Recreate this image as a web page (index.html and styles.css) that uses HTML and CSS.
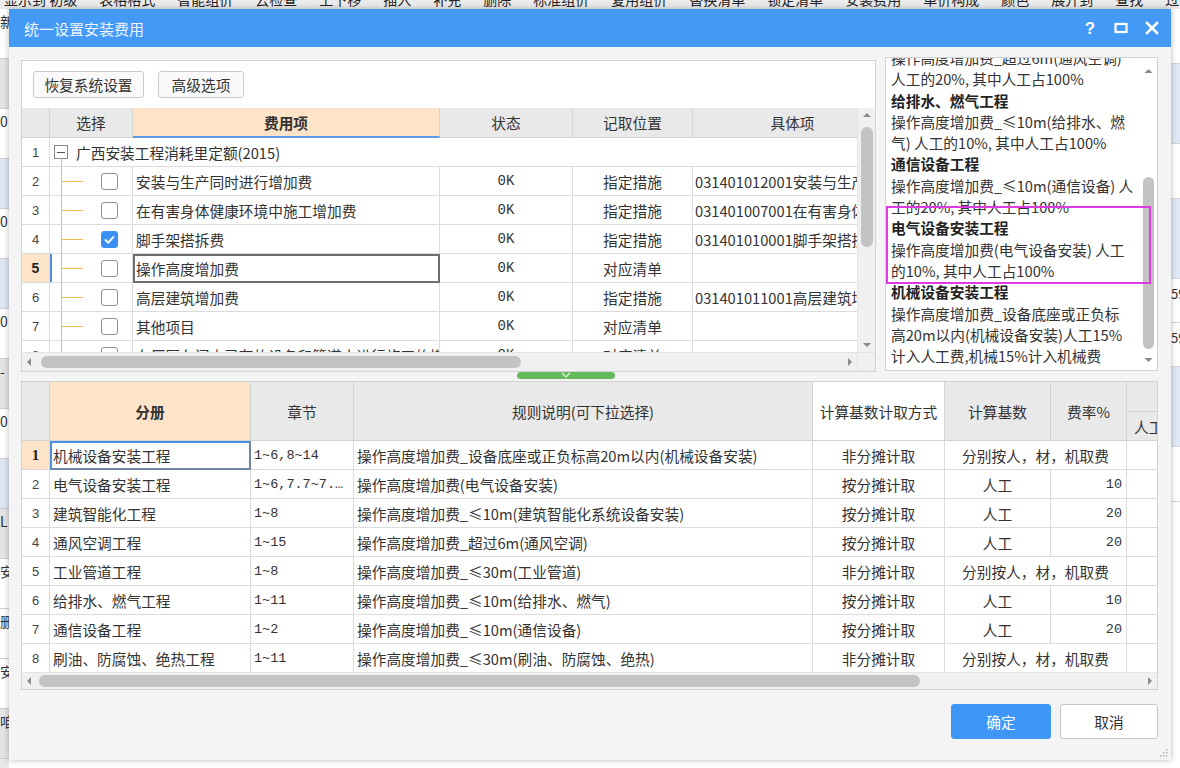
FILE: index.html
```html
<!DOCTYPE html>
<html lang="zh-CN">
<head>
<meta charset="utf-8">
<title>统一设置安装费用</title>
<link rel="stylesheet" href="styles.css">
</head>
<body>
<div class="backdrop">
  <div class="bg-top"><span>显示到 初级</span><span>表格格式</span><span>智能组价</span><span>云检查</span><span>上下移</span><span>插入</span><span>补充</span><span>删除</span><span>标准组价</span><span>复用组价</span><span>替换清单</span><span>锁定清单</span><span>安装费用</span><span>单价构成</span><span>颜色</span><span>展开到</span><span>查找</span><span>过滤</span></div>
  <div class="bg-main">
    <div class="bg-left">
      <div class="bl bl-white">新</div>
      <div class="bl bl-gray"></div>
      <div class="bl bl-white">0</div>
      <div class="bl bl-blue"></div>
      <div class="bl bl-white">0</div>
      <div class="bl bl-blue"></div>
      <div class="bl bl-white">0</div>
      <div class="bl bl-gray">-</div>
      <div class="bl bl-white">0</div>
      <div class="bl bl-blue"></div>
      <div class="bl bl-gray">L</div>
      <div class="bl bl-white">安</div>
      <div class="bl bl-white">删</div>
      <div class="bl bl-white">安</div>
      <div class="bl bl-gray">咱</div>
    </div>
    <div class="bg-center"></div>
    <div class="bg-right">
      <div class="br br-white"></div>
      <div class="br br-blue"></div>
      <div class="br br-white"></div>
      <div class="br br-blue"></div>
      <div class="br br-white br-59">59</div>
      <div class="br br-white br-59">59</div>
      <div class="br br-blue"></div>
      <div class="br br-white"></div>
    </div>
  </div>
</div>

<div class="dialog">
  <div class="titlebar">
    <span class="title">统一设置安装费用</span>
    <div class="title-icons">
      <svg class="ti" viewBox="0 0 16 16" width="16" height="16"><text x="8" y="14" text-anchor="middle" class="qmark">?</text></svg>
      <svg class="ti" viewBox="0 0 16 16" width="16" height="16"><rect x="2.5" y="4" width="11" height="8" fill="none" stroke="#fff" stroke-width="2.2"/></svg>
      <svg class="ti" viewBox="0 0 16 16" width="16" height="16"><path d="M3 3 L13 13 M13 3 L3 13" stroke="#fff" stroke-width="2.6" stroke-linecap="square"/></svg>
    </div>
  </div>

  <div class="dlg-body">
    <div class="upper">
      <div class="fee-panel">
        <div class="fee-toolbar">
          <button class="tbtn btn-restore">恢复系统设置</button>
          <button class="tbtn btn-adv">高级选项</button>
        </div>
        <div class="ugrid">
          <div class="utable">
            <div class="urow uhead">
              <div class="c hc"></div>
              <div class="c hc">选择</div>
              <div class="c hc hc-fee">费用项</div>
              <div class="c hc">状态</div>
              <div class="c hc">记取位置</div>
              <div class="c hc">具体项</div>
            </div>
            <div class="urow">
              <div class="c num">1</div>
              <div class="c merged">
                <span class="minus-box"></span>
                <span class="root-text">广西安装工程消耗里定额(2015)</span>
              </div>
            </div>
            <div class="urow">
              <div class="c num">2</div>
              <div class="c sel"><span class="cb"></span></div>
              <div class="c fee">安装与生产同时进行增加费</div>
              <div class="c ctr mono">0K</div>
              <div class="c ctr">指定措施</div>
              <div class="c det">031401012001安装与生产同时进行增加费</div>
            </div>
            <div class="urow">
              <div class="c num">3</div>
              <div class="c sel"><span class="cb"></span></div>
              <div class="c fee">在有害身体健康环境中施工增加费</div>
              <div class="c ctr mono">0K</div>
              <div class="c ctr">指定措施</div>
              <div class="c det">031401007001在有害身体健康环境中施工增加费</div>
            </div>
            <div class="urow">
              <div class="c num">4</div>
              <div class="c sel"><span class="cb cb-on"><svg width="17" height="17" viewBox="0 0 17 17"><path d="M4 8.5 L7.2 11.6 L13 5.4" fill="none" stroke="#fff" stroke-width="2"/></svg></span></div>
              <div class="c fee">脚手架搭拆费</div>
              <div class="c ctr mono">0K</div>
              <div class="c ctr">指定措施</div>
              <div class="c det">031401010001脚手架搭拆费</div>
            </div>
            <div class="urow">
              <div class="c num num-cur">5</div>
              <div class="c sel sel-cur"><span class="cb"></span></div>
              <div class="c fee fee-cur">操作高度增加费</div>
              <div class="c ctr mono">0K</div>
              <div class="c ctr">对应清单</div>
              <div class="c det"></div>
            </div>
            <div class="urow">
              <div class="c num">6</div>
              <div class="c sel"><span class="cb"></span></div>
              <div class="c fee">高层建筑增加费</div>
              <div class="c ctr mono">0K</div>
              <div class="c ctr">指定措施</div>
              <div class="c det">031401011001高层建筑增加费</div>
            </div>
            <div class="urow">
              <div class="c num">7</div>
              <div class="c sel"><span class="cb"></span></div>
              <div class="c fee">其他项目</div>
              <div class="c ctr mono">0K</div>
              <div class="c ctr">对应清单</div>
              <div class="c det"></div>
            </div>
            <div class="urow">
              <div class="c num">8</div>
              <div class="c sel"><span class="cb"></span></div>
              <div class="c fee">在厂区车间内已有的设备和管道中进行施工的增加费</div>
              <div class="c ctr mono">0K</div>
              <div class="c ctr">对应清单</div>
              <div class="c det"></div>
            </div>
          </div>
          <div class="vscroll">
            <svg class="arr" width="18" height="14" viewBox="0 0 18 14"><polygon points="5,9 13,9 9,5" fill="#8a8a8a"/></svg>
            <div class="vthumb"></div>
            <div class="vspace"></div>
            <svg class="arr" width="18" height="14" viewBox="0 0 18 14"><polygon points="5,5 13,5 9,9" fill="#8a8a8a"/></svg>
          </div>
          <div class="hscroll">
            <svg class="harr" width="14" height="18" viewBox="0 0 14 18"><polygon points="9,5 9,13 5,9" fill="#8a8a8a"/></svg>
            <div class="hthumb hthumb-u"></div>
            <div class="hspace"></div>
            <svg class="harr" width="14" height="18" viewBox="0 0 14 18"><polygon points="5,5 5,13 9,9" fill="#8a8a8a"/></svg>
          </div>
          <div class="corner"></div>
        </div>
      </div>

      <div class="desc-panel">
        <div class="desc-text">
          <div class="dl">操作高度增加费_超过6m(通风空调)</div>
          <div class="dl">人工的20%, 其中人工占100%</div>
          <div class="dl dh">给排水、燃气工程</div>
          <div class="dl">操作高度增加费_≤10m(给排水、燃</div>
          <div class="dl">气) 人工的10%, 其中人工占100%</div>
          <div class="dl dh">通信设备工程</div>
          <div class="dl">操作高度增加费_≤10m(通信设备) 人</div>
          <div class="dl">工的20%, 其中人工占100%</div>
          <div class="dl dh">电气设备安装工程</div>
          <div class="dl">操作高度增加费(电气设备安装) 人工</div>
          <div class="dl">的10%, 其中人工占100%</div>
          <div class="dl dh">机械设备安装工程</div>
          <div class="dl">操作高度增加费_设备底座或正负标</div>
          <div class="dl">高20m以内(机械设备安装)人工15%</div>
          <div class="dl">计入人工费,机械15%计入机械费</div>
        </div>
        <div class="desc-scroll">
          <svg class="arr" width="15" height="14" viewBox="0 0 15 14"><polygon points="3.5,9 11.5,9 7.5,5" fill="#8a8a8a"/></svg>
          <div class="dspace"></div>
          <div class="dthumb"></div>
          <svg class="arr" width="15" height="14" viewBox="0 0 15 14"><polygon points="3.5,5 11.5,5 7.5,9" fill="#8a8a8a"/></svg>
        </div>
        <div class="highlight"></div>
      </div>
    </div>

    <div class="splitter">
      <div class="grip"><svg width="12" height="7" viewBox="0 0 12 7"><polyline points="2,1 6,5 10,1" fill="none" stroke="#e8f6e4" stroke-width="1.2"/></svg></div>
    </div>

    <div class="rule-panel">
      <div class="lgrid">
        <div class="lhead">
          <div class="c lh lh-span"></div>
          <div class="c lh lh-span hc-book">分册</div>
          <div class="c lh lh-span">章节</div>
          <div class="c lh lh-span">规则说明(可下拉选择)</div>
          <div class="c lh lh-span lh-white">计算基数计取方式</div>
          <div class="c lh lh-span">计算基数</div>
          <div class="c lh lh-span">费率%</div>
          <div class="c lh lh-top"></div>
          <div class="c lh lh-bot">人工</div>
        </div>
        <div class="lrow">
          <div class="c lnum lnum-cur">1</div>
          <div class="c ltxt book-cur">机械设备安装工程</div>
          <div class="c ltxt mono2">1~6,8~14</div>
          <div class="c ltxt">操作高度增加费_设备底座或正负标高20m以内(机械设备安装)</div>
          <div class="c ctr">非分摊计取</div>
          <div class="c ctr span2">分别按人，材，机取费</div>
          <div class="c"></div>
        </div>
        <div class="lrow">
          <div class="c lnum">2</div>
          <div class="c ltxt">电气设备安装工程</div>
          <div class="c ltxt mono2">1~6,7.7~7.…</div>
          <div class="c ltxt">操作高度增加费(电气设备安装)</div>
          <div class="c ctr">按分摊计取</div>
          <div class="c ctr">人工</div>
          <div class="c rgt mono2">10</div>
          <div class="c"></div>
        </div>
        <div class="lrow">
          <div class="c lnum">3</div>
          <div class="c ltxt">建筑智能化工程</div>
          <div class="c ltxt mono2">1~8</div>
          <div class="c ltxt">操作高度增加费_≤10m(建筑智能化系统设备安装)</div>
          <div class="c ctr">按分摊计取</div>
          <div class="c ctr">人工</div>
          <div class="c rgt mono2">20</div>
          <div class="c"></div>
        </div>
        <div class="lrow">
          <div class="c lnum">4</div>
          <div class="c ltxt">通风空调工程</div>
          <div class="c ltxt mono2">1~15</div>
          <div class="c ltxt">操作高度增加费_超过6m(通风空调)</div>
          <div class="c ctr">按分摊计取</div>
          <div class="c ctr">人工</div>
          <div class="c rgt mono2">20</div>
          <div class="c"></div>
        </div>
        <div class="lrow">
          <div class="c lnum">5</div>
          <div class="c ltxt">工业管道工程</div>
          <div class="c ltxt mono2">1~8</div>
          <div class="c ltxt">操作高度增加费_≤30m(工业管道)</div>
          <div class="c ctr">非分摊计取</div>
          <div class="c ctr span2">分别按人，材，机取费</div>
          <div class="c"></div>
        </div>
        <div class="lrow">
          <div class="c lnum">6</div>
          <div class="c ltxt">给排水、燃气工程</div>
          <div class="c ltxt mono2">1~11</div>
          <div class="c ltxt">操作高度增加费_≤10m(给排水、燃气)</div>
          <div class="c ctr">按分摊计取</div>
          <div class="c ctr">人工</div>
          <div class="c rgt mono2">10</div>
          <div class="c"></div>
        </div>
        <div class="lrow">
          <div class="c lnum">7</div>
          <div class="c ltxt">通信设备工程</div>
          <div class="c ltxt mono2">1~2</div>
          <div class="c ltxt">操作高度增加费_≤10m(通信设备)</div>
          <div class="c ctr">按分摊计取</div>
          <div class="c ctr">人工</div>
          <div class="c rgt mono2">20</div>
          <div class="c"></div>
        </div>
        <div class="lrow">
          <div class="c lnum">8</div>
          <div class="c ltxt">刷油、防腐蚀、绝热工程</div>
          <div class="c ltxt mono2">1~11</div>
          <div class="c ltxt">操作高度增加费_≤30m(刷油、防腐蚀、绝热)</div>
          <div class="c ctr">非分摊计取</div>
          <div class="c ctr span2">分别按人，材，机取费</div>
          <div class="c"></div>
        </div>
      </div>
      <div class="hscroll lscroll">
        <svg class="harr" width="14" height="16" viewBox="0 0 14 16"><polygon points="9,4 9,12 5,8" fill="#8a8a8a"/></svg>
        <div class="hthumb hthumb-l"></div>
        <div class="hspace"></div>
        <svg class="harr" width="14" height="16" viewBox="0 0 14 16"><polygon points="5,4 5,12 9,8" fill="#8a8a8a"/></svg>
      </div>
    </div>

    <div class="footer">
      <button class="fbtn ok">确定</button>
      <button class="fbtn cancel">取消</button>
    </div>
  </div>
  <svg class="resize-grip" width="9" height="9" viewBox="0 0 9 9"><g fill="#b5b5b5"><rect x="7" y="1" width="1.5" height="1.5"/><rect x="4" y="4" width="1.5" height="1.5"/><rect x="7" y="4" width="1.5" height="1.5"/><rect x="1" y="7" width="1.5" height="1.5"/><rect x="4" y="7" width="1.5" height="1.5"/><rect x="7" y="7" width="1.5" height="1.5"/></g></svg>
</div>
</body>
</html>
```

FILE: styles.css
```css
* { box-sizing: border-box; }
html, body { margin: 0; padding: 0; }
body {
  width: 1180px;
  height: 768px;
  overflow: hidden;
  position: relative;
  font-family: "Noto Sans CJK SC", "Noto Sans", sans-serif;
  font-size: 14.7px;
  color: #333;
  background: #f0f0f0;
}

/* ---------- backdrop application ---------- */
.backdrop { width: 1180px; height: 768px; display: flex; flex-direction: column; }
.bg-top {
  height: 9px;
  background: #ebebeb;
  overflow: hidden;
  white-space: nowrap;
  font-size: 14px;
  line-height: 14px;
  color: #222;
  display: flex;
  gap: 22px;
  padding-left: 4px;
}
.bg-top span { display: block; margin-top: -8px; }
.bg-main { flex: 1; display: flex; }
.bg-left { width: 9px; overflow: hidden; display: flex; flex-direction: column; background: #e6e6e6; font-size: 14px; color: #333; }
.bl { height: 50px; line-height: 24px; white-space: nowrap; border-bottom: 1px solid #cfcfcf; }
.bl-white { background: #fff; }
.bl-gray { background: #e4e4e4; }
.bl-blue { background: #dce6f3; }
.bg-center { flex: 1; background: #fff; }
.bg-right { width: 9px; overflow: hidden; display: flex; flex-direction: column; background: #fff; font-size: 13px; color: #333; }
.br { height: 55px; border-bottom: 1px solid #d6d6d6; line-height: 30px; white-space: nowrap; }
.br-white { background: #fff; }
.br-blue { background: #dfe8f5; height: 80px; }
.br-59 { height: 44px; }

/* ---------- dialog window ---------- */
.dialog {
  position: absolute;
  left: 9px;
  top: 9px;
  width: 1162px;
  height: 751px;
  background: #f4f4f4;
  box-shadow: 0 0 6px rgba(0, 0, 0, 0.28);
  display: flex;
  flex-direction: column;
}
.titlebar {
  height: 38px;
  background: #4399f6;
  display: flex;
  align-items: center;
  padding-left: 15px;
  padding-right: 11px;
}
.title { color: #eef5ff; font-size: 15px; flex: 1; }
.title-icons { display: flex; gap: 15px; align-items: center; }
.ti { display: block; }
.qmark { fill: #fff; font-family: "Liberation Sans", sans-serif; font-weight: bold; font-size: 17px; }

.dlg-body {
  flex: 1;
  display: flex;
  flex-direction: column;
  padding: 10px 13px 0 12px;
}

/* ---------- upper area ---------- */
.upper { height: 315px; display: flex; gap: 9px; }

.fee-panel {
  width: 855px;
  height: 312px;
  margin-top: 3px;
  border: 1px solid #d2d2d2;
  background: #fff;
  display: flex;
  flex-direction: column;
}
.fee-toolbar { height: 47px; display: flex; gap: 14px; padding: 10px 0 0 11px; align-items: flex-start; }
.tbtn {
  height: 27px;
  border: 1px solid #c9c9c9;
  border-radius: 3px;
  background: #fafafa;
  font-family: "Noto Sans CJK SC", sans-serif;
  font-size: 14.7px;
  color: #333;
  padding: 0;
  line-height: 25px;
}
.btn-restore { width: 111px; }
.btn-adv { width: 86px; }

.ugrid {
  flex: 1;
  display: grid;
  grid-template-columns: 835px 18px;
  grid-template-rows: 244px 19px;
}
.utable { overflow: hidden; }
.urow {
  display: grid;
  grid-template-columns: 28px 83px 307px 133px 120px 200px;
  width: 871px;
  height: 29px;
}
.uhead { height: 30px; }

.c {
  border-right: 1px solid #dbdbdb;
  border-bottom: 1px solid #dbdbdb;
  display: flex;
  align-items: center;
  white-space: nowrap;
  overflow: hidden;
  min-width: 0;
}
.hc {
  background: #e9e9e9;
  border-color: #d3d3d3;
  justify-content: center;
  color: #333;
}
.hc-fee { background: #fde4c9; font-weight: bold; border-bottom: 2px solid #5b9be6; }
.num { justify-content: center; font-size: 13px; color: #444; font-family: "Liberation Sans", sans-serif; }
.num-cur { background: #fde4c9; font-weight: bold; color: #222; font-size: 14px; }
.merged {
  grid-column: 2 / -1;
  border-right: none;
  background-image: linear-gradient(#efbd5c, #efbd5c);
  background-size: 1px 8px;
  background-position: 11px 21px;
  background-repeat: no-repeat;
}
.minus-box {
  width: 14px;
  height: 14px;
  margin-left: 4px;
  border: 1px solid #8a8a8a;
  background: #fff linear-gradient(#555, #555) no-repeat 2px 5.5px / 8px 1px;
  flex: none;
  display: block;
}
.root-text { margin-left: 8px; }
.sel {
  padding: 0;
  background-image: linear-gradient(#efbd5c, #efbd5c), linear-gradient(#efbd5c, #efbd5c);
  background-size: 1px 100%, 21px 1px;
  background-position: 11px 0, 12px 14px;
  background-repeat: no-repeat;
}
.sel-cur { box-shadow: inset 2px 0 0 #4a90e2; }
.cb {
  width: 17px;
  height: 17px;
  margin-left: 51px;
  border: 1px solid #8f8f8f;
  border-radius: 3px;
  background: #fff;
  flex: none;
  display: block;
}
.cb-on { background: #3b8ff0; border-color: #3b8ff0; }
.cb-on svg { display: block; margin: -1px 0 0 -1px; }
.fee { padding-left: 3px; }
.fee-cur { border: 2px solid #6e6e6e; padding-left: 1px; }
.ctr { justify-content: center; }
.rgt { justify-content: flex-end; padding-right: 4px; }
.mono { font-family: "Liberation Mono", monospace; font-size: 14px; color: #333; }
.det { padding-left: 2px; }

.vscroll {
  background: #f0f0f0;
  display: flex;
  flex-direction: column;
  align-items: center;
  border-left: 1px solid #e4e4e4;
}
.arr { display: block; flex: none; }
.vthumb { width: 12px; height: 120px; margin-top: 5px; background: #c3c3c3; border-radius: 6px; }
.vspace { flex: 1; }

.hscroll {
  background: #f0f0f0;
  display: flex;
  align-items: center;
  border-top: 1px solid #e4e4e4;
}
.harr { display: block; flex: none; }
.hthumb { height: 12px; background: #c3c3c3; border-radius: 6px; }
.hthumb-u { width: 480px; margin-left: 5px; }
.hspace { flex: 1; }
.corner { background: #f0f0f0; border-top: 1px solid #e4e4e4; border-left: 1px solid #e4e4e4; }

/* ---------- description panel ---------- */
.desc-panel {
  width: 273px;
  height: 314px;
  border: 1px solid #d2d2d2;
  background: #fff;
  display: flex;
  position: relative;
  overflow: hidden;
}
.desc-text {
  flex: 1;
  padding-left: 5px;
  margin-top: -11px;
  font-size: 14.7px;
  line-height: 21.3px;
  color: #333;
  overflow: hidden;
}
.dl { white-space: nowrap; height: 21.3px; }
.dh { font-weight: bold; color: #222; }
.desc-scroll {
  width: 15px;
  margin-right: 1px;
  display: flex;
  flex-direction: column;
  align-items: center;
  background: #fff;
  padding: 6px 0 3px;
}
.dspace { height: 99px; }
.dthumb { width: 11px; flex: 1; margin-bottom: 4px; background: #c3c3c3; border-radius: 6px; }
.highlight {
  position: absolute;
  left: 0;
  top: 148px;
  width: 265px;
  height: 78px;
  border: 2px solid #e03ae4;
  pointer-events: none;
}

/* ---------- splitter ---------- */
.splitter { height: 9px; padding-left: 496px; }
.grip {
  width: 98px;
  height: 7px;
  background: #64b95b;
  border-radius: 4px;
  display: flex;
  justify-content: center;
  align-items: flex-start;
}
.grip svg { display: block; }

/* ---------- rule panel ---------- */
.rule-panel {
  height: 309px;
  border: 1px solid #d2d2d2;
  background: #fff;
  display: flex;
  flex-direction: column;
  overflow: hidden;
}
.lgrid { flex: 1; overflow: hidden; }
.lhead {
  display: grid;
  grid-template-columns: 28px 201px 103px 459px 132px 106px 76px 60px;
  grid-template-rows: 30px 29px;
  width: 1165px;
}
.lh { background: #e9e9e9; border-color: #d3d3d3; justify-content: center; }
.lh-span { grid-row: 1 / 3; }
.hc-book { background: #fde4c9; font-weight: bold; }
.lh-white { background: #fff; }
.lh-top { grid-column: 8; grid-row: 1; }
.lh-bot { grid-column: 8; grid-row: 2; justify-content: flex-start; padding-left: 7px; }
.lrow {
  display: grid;
  grid-template-columns: 28px 201px 103px 459px 132px 106px 76px 60px;
  width: 1165px;
  height: 29px;
}
.lnum { justify-content: center; font-size: 13px; font-family: "Liberation Sans", sans-serif; color: #444; }
.lnum-cur { background: #fde4c9; font-weight: bold; font-family: "Liberation Serif", serif; font-size: 15px; color: #222; }
.ltxt { padding-left: 3px; }
.book-cur { border: 2px solid #6f86a8; border-top-color: #4a8fe0; border-left-color: #4a8fe0; padding-left: 1px; }
.mono2 { font-family: "Liberation Mono", monospace; font-size: 13.5px; }
.span2 { grid-column: span 2; }

.lscroll { height: 17px; }
.hthumb-l { width: 881px; margin-left: 3px; }

/* ---------- footer ---------- */
.footer { margin-top: 14px; display: flex; justify-content: flex-end; gap: 9px; }
.fbtn {
  height: 35px;
  border-radius: 3px;
  font-family: "Noto Sans CJK SC", sans-serif;
  font-size: 14.7px;
  padding: 0;
}
.ok { width: 100px; background: #3e97f6; border: 1px solid #3e97f6; color: #fff; }
.cancel { width: 98px; background: #fff; border: 1px solid #c8c8c8; color: #333; }
.resize-grip { position: absolute; right: 3px; bottom: 3px; display: block; }
```
